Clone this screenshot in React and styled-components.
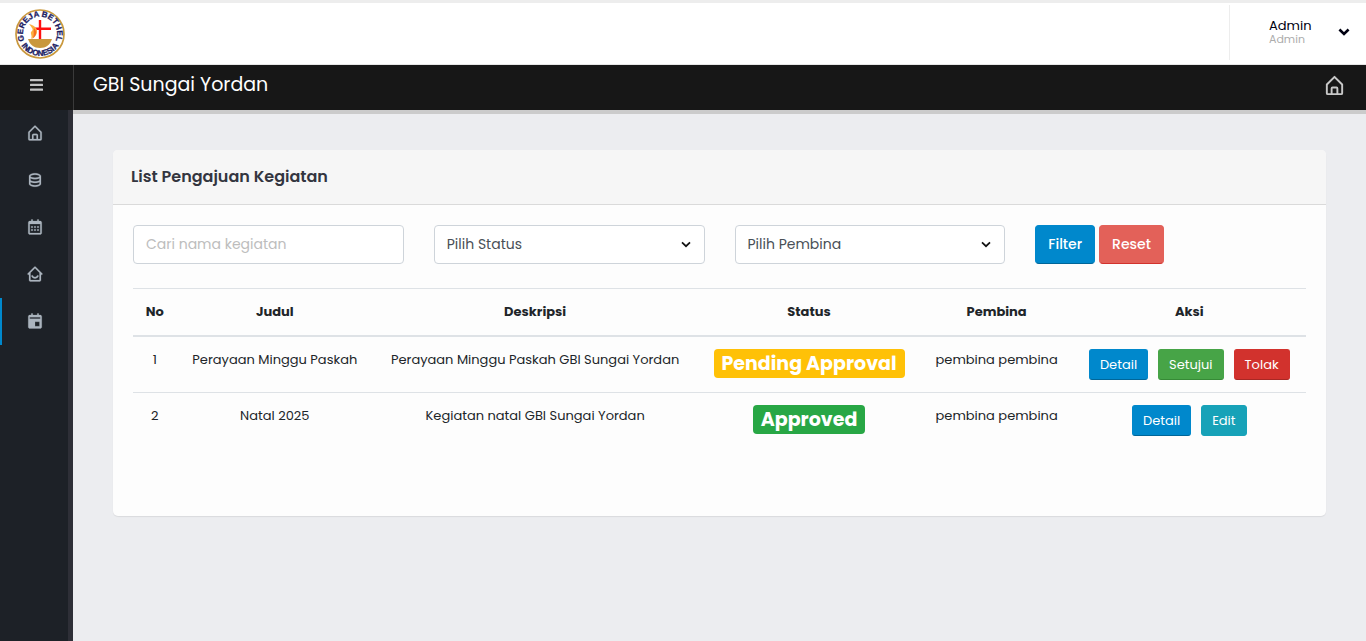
import React from "react";
import styled, { createGlobalStyle } from "styled-components";
import { BiHomeAlt, BiData, BiCalendar, BiHomeSmile, BiSolidCalendarEvent } from "react-icons/bi";

const GlobalStyle = createGlobalStyle`
  *, *::before, *::after { box-sizing: border-box; }
  body {
    margin: 0;
    background: #ecedf0;
    color: #212529;
    font-family: Poppins, Inter, "Open Sans", sans-serif;
    font-size: 13px;
    line-height: 21px;
  }
  button, input, select { font: inherit; }
`;

const Page = styled.div`
  display: flex;
  flex-direction: column;
  min-height: 100vh;
`;

const TopBar = styled.header`
  display: flex;
  justify-content: space-between;
  height: 65px;
  padding-left: 15px;
  background: #fff;
  border-top: 3px solid #ededed;
  border-bottom: 1px solid #e6e6e6;
`;

const LogoLink = styled.a`
  display: block;
  height: 50px;
  margin-top: 6px;
`;

const UserMenu = styled.button`
  display: flex;
  align-items: center;
  justify-content: space-between;
  width: 137px;
  height: 55px;
  margin-top: 2px;
  padding: 0 16px 1px 39px;
  border: 0;
  border-left: 1px solid #ededed;
  background: none;
  color: #000011;
  text-align: left;
`;

const UserText = styled.span`
  display: flex;
  flex-direction: column;
`;

const UserName = styled.span`
  font-size: 13px;
  line-height: 14px;
`;

const UserRole = styled.span`
  color: #acacac;
  font-size: 11px;
  line-height: 12px;
`;

const TitleBar = styled.div`
  display: flex;
  height: 45px;
  background: #171717;
  color: #fff;
`;

const MenuToggle = styled.button`
  display: flex;
  align-items: center;
  justify-content: center;
  width: 74px;
  padding: 0 0 5px;
  border: 0;
  border-right: 1px solid #3a3a3a;
  background: none;
  color: #c3c3c3;
`;

const PageTitle = styled.h1`
  flex: 1;
  margin: 0;
  padding-left: 19px;
  font-size: 19px;
  font-weight: 400;
  line-height: 39px;
`;

const HomeLink = styled.a`
  display: flex;
  align-items: center;
  padding: 0 20px 4px 0;
  color: #c8c8c8;
  font-size: 23px;
`;

const Columns = styled.div`
  display: flex;
  flex: 1;
`;

const Sidebar = styled.nav`
  width: 73px;
  background: #1d2127;
  border-right: 5px solid #2e2f37;
`;

const SideLink = styled.a`
  display: flex;
  align-items: center;
  justify-content: center;
  height: 47px;
  padding-bottom: 1px;
  border-left: 2px solid ${(p) => (p.$active ? "#0088cc" : "transparent")};
  color: #abb4be;
  font-size: 18px;

  svg { stroke: currentColor; stroke-width: 0.3px; }
`;

const Main = styled.main`
  flex: 1;
  min-width: 0;
  padding: 36px 40px 40px;
  border-top: 4px solid #cbcbcb;
`;

const Card = styled.section`
  border-radius: 5px;
  background: #fdfdfd;
  box-shadow: 0 1px 1px rgba(0, 0, 0, 0.08);
  overflow: hidden;
`;

const CardHeader = styled.header`
  padding: 16px 18px;
  border-bottom: 1px solid #dadada;
  background: #f6f6f6;
`;

const CardTitle = styled.h2`
  margin: 0;
  color: #33353f;
  font-size: 16px;
  font-weight: 600;
  line-height: 22px;
`;

const CardBody = styled.div`
  padding: 20px 20px 68px;
`;

const Filters = styled.form`
  display: grid;
  grid-template-columns: repeat(4, 1fr);
  gap: 30px;
  margin-bottom: 24px;
  font-size: 14px;
`;

const SearchInput = styled.input`
  width: 100%;
  height: 39px;
  padding: 0 12px;
  border: 1px solid #ced4da;
  border-radius: 4px;
  background: #fff;
  &::placeholder { color: #bdbdbd; opacity: 1; }
`;

const SelectWrap = styled.div`
  display: grid;
  align-items: center;
  & > * { grid-area: 1 / 1; }
  & > svg { justify-self: end; margin-right: 14px; pointer-events: none; }
`;

const Select = styled.select`
  width: 100%;
  height: 39px;
  padding: 0 12px;
  border: 1px solid #ced4da;
  border-radius: 4px;
  background: #fff;
  color: #495057;
  appearance: none;
`;

const FilterActions = styled.div`
  display: flex;
  gap: 4px;
`;

const tones = {
  primary: ["#0088cc", "#006699"],
  reset: ["#e36159", "#d2322d"],
  success: ["#47a447", "#368a36"],
  danger: ["#d2322d", "#a82824"],
  info: ["#17a2b8", "#17a2b8"],
};

const Button = styled.button`
  height: ${(p) => (p.$small ? 31 : 39)}px;
  padding: 0 ${(p) => (p.$small ? 10 : 12)}px;
  border: 1px solid ${(p) => tones[p.$tone][0]};
  border-bottom-color: ${(p) => tones[p.$tone][1]};
  border-radius: ${(p) => (p.$small ? 3 : 4)}px;
  background: ${(p) => tones[p.$tone][0]};
  color: #fff;
  font-size: ${(p) => (p.$small ? 13 : 14)}px;
  font-weight: ${(p) => (p.$small ? 400 : 500)};
`;

const Table = styled.table`
  width: 100%;
  border-collapse: separate;
  border-spacing: 0;
  text-align: center;
`;

const HeadCell = styled.th`
  padding: 12px 12px 13px;
  border-top: 1px solid #dee2e6;
  border-bottom: 2px solid #dee2e6;
  font-weight: 700;
`;

const Row = styled.tr`
  & + & > td { border-top: 1px solid #dee2e6; }
`;

const Cell = styled.td`
  padding: 12px;
  vertical-align: top;
`;

const Badge = styled.span`
  display: inline-block;
  padding: 0 8px;
  border-radius: 4px;
  background: ${(p) => (p.$tone === "warning" ? "#ffc107" : "#28a745")};
  color: #fff;
  font-size: 19px;
  font-weight: 700;
  line-height: 29px;
  white-space: nowrap;
`;

const RowActions = styled.div`
  display: flex;
  justify-content: center;
  gap: 10px;
`;

function Logo() {
  return (
    <svg width="50" height="50" viewBox="0 0 50 50" role="img" aria-label="Gereja Bethel Indonesia">
      <defs>
        <path id="logo-top" d="M9.2 31 A17 17 0 1 1 40.8 31" />
        <path id="logo-bottom" d="M3.6 30 A22 22 0 0 0 46.4 30" />
      </defs>
      <circle cx="25" cy="25" r="24" fill="#fff" stroke="#c9983d" strokeWidth="1.7" />
      <path d="M13 30 H37 C35 36 31 39 25 39 S15 36 13 30Z" fill="#c9983d" />
      <path d="M25 11V30M19 19.8H36" stroke="#ff1010" strokeWidth="2.4" />
      <path d="M14 15 C21 17 24 21 21 26 L16 30 C18 26 14 24 17 22 C19 20 16 18 14 15Z" fill="#fbb040" />
      <path d="M19 19 C23 23 21 28 17 30 C20 26 18 23 19 19Z" fill="#f7701f" />
      <g fill="#1b1b62" stroke="#1b1b62" strokeWidth="0.3" fontFamily="'Liberation Sans', sans-serif" fontSize="8" fontWeight="700">
        <text textAnchor="middle"><textPath href="#logo-top" startOffset="50%">GEREJA BETHEL</textPath></text>
        <text textAnchor="middle"><textPath href="#logo-bottom" startOffset="50%">INDONESIA</textPath></text>
      </g>
    </svg>
  );
}

function MenuIcon() {
  return (
    <svg width="13" height="12" viewBox="0 0 13 12" fill="currentColor" aria-hidden="true">
      <rect width="13" height="2.3" rx="0.5" />
      <rect y="4.7" width="13" height="2.3" rx="0.5" />
      <rect y="9.4" width="13" height="2.3" rx="0.5" />
    </svg>
  );
}

function Chevron({ bold }) {
  return (
    <svg width={bold ? 12 : 10} height={bold ? 8 : 7} viewBox="0 0 10 7" fill="none" aria-hidden="true">
      <path d="M1 1.3 L5 5.2 L9 1.3" stroke={bold ? "#000011" : "#111"} strokeWidth={bold ? 2.3 : 1.7} />
    </svg>
  );
}

const navItems = [
  { label: "Beranda", Icon: BiHomeAlt },
  { label: "Data", Icon: BiData },
  { label: "Kalender", Icon: BiCalendar },
  { label: "Jemaat", Icon: BiHomeSmile },
  { label: "Kegiatan", Icon: BiSolidCalendarEvent, active: true },
];

const columns = ["No", "Judul", "Deskripsi", "Status", "Pembina", "Aksi"];

const rows = [
  {
    no: 1,
    title: "Perayaan Minggu Paskah",
    description: "Perayaan Minggu Paskah GBI Sungai Yordan",
    status: "Pending Approval",
    tone: "warning",
    mentor: "pembina pembina",
    actions: [["Detail", "primary"], ["Setujui", "success"], ["Tolak", "danger"]],
  },
  {
    no: 2,
    title: "Natal 2025",
    description: "Kegiatan natal GBI Sungai Yordan",
    status: "Approved",
    tone: "success",
    mentor: "pembina pembina",
    actions: [["Detail", "primary"], ["Edit", "info"]],
  },
];

function FilterSelect({ label }) {
  return (
    <SelectWrap>
      <Select aria-label={label} defaultValue="">
        <option value="">{label}</option>
      </Select>
      <Chevron />
    </SelectWrap>
  );
}

export default function App() {
  return (
    <Page>
      <GlobalStyle />
      <TopBar>
        <LogoLink href="#"><Logo /></LogoLink>
        <UserMenu type="button">
          <UserText>
            <UserName>Admin</UserName>
            <UserRole>Admin</UserRole>
          </UserText>
          <Chevron bold />
        </UserMenu>
      </TopBar>
      <TitleBar>
        <MenuToggle type="button" aria-label="Menu"><MenuIcon /></MenuToggle>
        <PageTitle>GBI Sungai Yordan</PageTitle>
        <HomeLink href="#" aria-label="Beranda"><BiHomeAlt /></HomeLink>
      </TitleBar>
      <Columns>
        <Sidebar>
          {navItems.map(({ label, Icon, active }) => (
            <SideLink key={label} href="#" aria-label={label} $active={active}><Icon /></SideLink>
          ))}
        </Sidebar>
        <Main>
          <Card>
            <CardHeader><CardTitle>List Pengajuan Kegiatan</CardTitle></CardHeader>
            <CardBody>
              <Filters onSubmit={(e) => e.preventDefault()}>
                <SearchInput type="text" aria-label="Cari nama kegiatan" placeholder="Cari nama kegiatan" />
                <FilterSelect label="Pilih Status" />
                <FilterSelect label="Pilih Pembina" />
                <FilterActions>
                  <Button type="submit" $tone="primary">Filter</Button>
                  <Button type="reset" $tone="reset">Reset</Button>
                </FilterActions>
              </Filters>
              <Table>
                <thead>
                  <tr>{columns.map((name) => <HeadCell key={name} scope="col">{name}</HeadCell>)}</tr>
                </thead>
                <tbody>
                  {rows.map((row) => (
                    <Row key={row.no}>
                      <Cell>{row.no}</Cell>
                      <Cell>{row.title}</Cell>
                      <Cell>{row.description}</Cell>
                      <Cell><Badge $tone={row.tone}>{row.status}</Badge></Cell>
                      <Cell>{row.mentor}</Cell>
                      <Cell>
                        <RowActions>
                          {row.actions.map(([name, tone]) => (
                            <Button key={name} type="button" $small $tone={tone}>{name}</Button>
                          ))}
                        </RowActions>
                      </Cell>
                    </Row>
                  ))}
                </tbody>
              </Table>
            </CardBody>
          </Card>
        </Main>
      </Columns>
    </Page>
  );
}
